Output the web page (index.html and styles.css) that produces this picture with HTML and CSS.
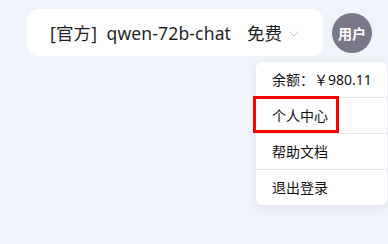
FILE: index.html
```html
<!DOCTYPE html>
<html lang="zh-CN">
<head>
    <meta charset="UTF-8">
    <meta name="viewport" content="width=device-width, initial-scale=1.0">
    <title>模型选择</title>
    <link rel="stylesheet" href="styles.css">
</head>
<body>
    <div class="header">
        <div class="model-select">
            <span class="model-name">[官方]&nbsp; qwen-72b-chat</span>
            <span class="model-price">免费</span>
            <svg class="arrow" width="10" height="6" viewBox="0 0 10 6">
                <path d="M0.5 0.5 L5 5 L9.5 0.5" fill="none" stroke="#c0c4cc" stroke-width="1"/>
            </svg>
        </div>
        <div class="avatar">用户</div>
    </div>

    <div class="user-menu">
        <div class="menu-item">余额：￥980.11</div>
        <div class="menu-item">个人中心</div>
        <div class="menu-item">帮助文档</div>
        <div class="menu-item">退出登录</div>
        <div class="highlight"></div>
    </div>
</body>
</html>
```

FILE: styles.css
```css
body {
    margin: 0;
    background: #f1f3fa;
    font-family: "Noto Sans", "Noto Sans CJK SC", sans-serif;
    color: #1f1f1f;
}

.header {
    display: flex;
    align-items: center;
    padding: 9px 16px 0 27px;
    gap: 9px;
}

.model-select {
    display: flex;
    align-items: center;
    width: 296px;
    height: 47px;
    box-sizing: border-box;
    padding-left: 23px;
    background: white;
    border-radius: 12px;
    font-size: 17.5px;
}

.model-name {
    letter-spacing: 0.15px;
}

.model-price {
    margin-left: 16px;
}

.arrow {
    margin-left: 7px;
    margin-top: 2px;
}

.avatar {
    width: 40px;
    height: 40px;
    border-radius: 50%;
    background: #79788b;
    color: white;
    font-weight: bold;
    font-size: 14px;
    display: flex;
    align-items: center;
    justify-content: center;
}

.user-menu {
    position: absolute;
    top: 62px;
    left: 256px;
    width: 131px;
    background: white;
    border-radius: 6px;
    box-shadow: 0 2px 8px rgba(0, 0, 0, 0.08);
}

.menu-item {
    height: 35px;
    line-height: 35px;
    padding-left: 16px;
    font-size: 14px;
    color: #111;
    border-top: 1px solid #e6e6e6;
}

.menu-item:first-child {
    border-top: none;
}

.highlight {
    position: absolute;
    left: -3px;
    top: 34px;
    width: 80px;
    height: 31px;
    border: 3px solid #f00;
}
```
